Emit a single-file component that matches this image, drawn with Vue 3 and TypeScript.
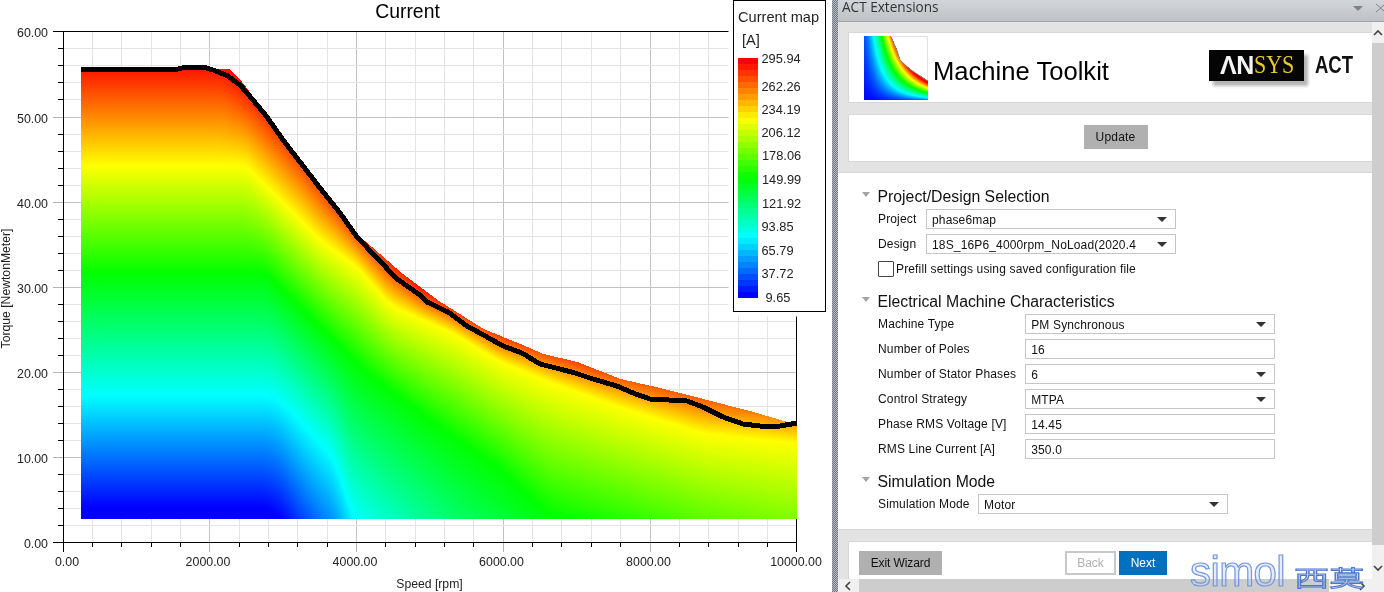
<script setup lang="ts">
import { onMounted, ref } from 'vue'

type Pt = [number, number]

// piecewise linear lookup along x
function lerpAt(pts: Pt[], x: number): number {
  if (x <= pts[0][0]) return pts[0][1]
  for (let i = 1; i < pts.length; i++) {
    if (x <= pts[i][0]) {
      const [x0, y0] = pts[i - 1]
      const [x1, y1] = pts[i]
      return y0 + ((y1 - y0) * (x - x0)) / (x1 - x0)
    }
  }
  return pts[pts.length - 1][1]
}

function rainbow(t: number): [number, number, number] {
  const v = Math.min(1, Math.max(0, t)) * 4
  if (v < 1) return [0, Math.round(255 * v), 255]
  if (v < 2) return [0, 255, Math.round(255 * (2 - v))]
  if (v < 3) return [Math.round(255 * (v - 2)), 255, 0]
  return [255, Math.round(255 * (4 - v)), 0]
}

// iso current lines of the map, screen coordinates
const contours: { t: number; pts: Pt[] }[] = [
  { t: 1, pts: [[81, 60], [222, 60], [262, 95], [300, 140], [357, 222], [420, 285], [500, 328], [600, 358], [700, 378], [797, 392]] },
  { t: 0.75, pts: [[81, 165], [245, 165], [287, 207], [320, 240], [357, 267], [390, 305], [453, 333], [497, 360], [550, 382], [620, 407], [703, 433], [797, 443]] },
  { t: 0.5, pts: [[81, 273], [265, 273], [293, 300], [367, 373], [430, 420], [497, 467], [550, 515], [797, 595]] },
  { t: 0.25, pts: [[81, 395], [270, 395], [283, 403], [333, 457], [353, 517], [420, 590], [550, 750], [797, 900]] },
  { t: 0, pts: [[81, 507], [265, 507], [283, 519], [353, 640], [420, 720], [797, 1100]] }
]

const upperEdge: Pt[] = [
  [81, 69], [229, 69], [240, 80], [267, 115], [357, 235], [367, 243], [400, 272], [420, 287], [440, 302], [453, 310],
  [483, 329], [520, 344], [543, 354], [577, 362], [620, 379], [660, 388], [703, 399], [753, 412], [787, 422], [797, 424]
]

const curvePts: Pt[] = [
  [81, 69.5], [176, 69.5], [184, 67.5], [205, 67.5], [213, 70], [227, 75.5], [240, 85], [253, 100], [267, 117], [283, 140],
  [300, 162], [320, 188], [340, 213], [357, 237], [377, 258], [397, 279], [420, 295], [427, 302], [448, 312], [467, 326],
  [487, 337], [503, 346], [522, 353], [540, 364], [560, 369], [575, 373], [593, 379], [617, 386], [633, 393], [650, 399],
  [687, 401], [703, 407], [723, 417], [743, 424], [760, 426], [780, 426], [797, 423]
]
const curve = curvePts.map((p) => p.join(',')).join(' ')

const gridX = Array.from({ length: 26 }, (_, i) => ({ x: Math.floor(63 + i * 29.35) + 0.5, major: i % 5 === 0 }))
const gridY = Array.from({ length: 31 }, (_, i) => ({ y: Math.floor(31.9 + i * 17.02) + 0.5, major: i % 5 === 0 }))

const yLabels = [
  { text: '60.00', y: 32 },
  { text: '50.00', y: 118 },
  { text: '40.00', y: 203 },
  { text: '30.00', y: 288 },
  { text: '20.00', y: 373 },
  { text: '10.00', y: 458 },
  { text: '0.00', y: 543 }
]
const xLabels = [
  { text: '0.00', x: 67 },
  { text: '2000.00', x: 208 },
  { text: '4000.00', x: 355 },
  { text: '6000.00', x: 501.5 },
  { text: '8000.00', x: 648.5 },
  { text: '10000.00', x: 796 }
]

const legendTicks = [
  { text: '295.94', left: 27.5, top: 58.5 },
  { text: '262.26', left: 27.5, top: 86.5 },
  { text: '234.19', left: 27.5, top: 109.5 },
  { text: '206.12', left: 27.5, top: 133 },
  { text: '178.06', left: 28, top: 156 },
  { text: '149.99', left: 28, top: 180 },
  { text: '121.92', left: 28, top: 203.5 },
  { text: '93.85', left: 27.5, top: 227 },
  { text: '65.79', left: 27.5, top: 251 },
  { text: '37.72', left: 27.5, top: 274 },
  { text: '9.65', left: 31.5, top: 298 }
]

const legendBands = Array.from({ length: 40 }, (_, i) => {
  const [r, g, b] = rainbow(1 - i / 39)
  return `rgb(${r},${g},${b})`
})

const projectRows = [
  { label: 'Project', value: 'phase6map', select: true },
  { label: 'Design', value: '18S_16P6_4000rpm_NoLoad(2020.4', select: true }
]
const machineRows = [
  { label: 'Machine Type', value: 'PM Synchronous', select: true },
  { label: 'Number of Poles', value: '16', select: false },
  { label: 'Number of Stator Phases', value: '6', select: true },
  { label: 'Control Strategy', value: 'MTPA', select: true },
  { label: 'Phase RMS Voltage [V]', value: '14.45', select: false },
  { label: 'RMS Line Current [A]', value: '350.0', select: false }
]
const modeRows = [{ label: 'Simulation Mode', value: 'Motor', select: true }]

const heatCanvas = ref<HTMLCanvasElement | null>(null)
const thumbCanvas = ref<HTMLCanvasElement | null>(null)

function drawHeat(cv: HTMLCanvasElement) {
  const ctx = cv.getContext('2d')
  if (!ctx) return
  const img = ctx.createImageData(cv.width, cv.height)
  for (let x = 81; x <= 796; x++) {
    // soften the contour corners a little
    const ys = contours.map((c) => {
      let sum = 0
      for (let k = -6; k <= 6; k += 2) sum += lerpAt(c.pts, x + k)
      return sum / 7
    })
    const top = Math.round(lerpAt(upperEdge, x))
    for (let y = top; y < 519; y++) {
      let t = 1
      if (y >= ys[ys.length - 1]) t = 0
      else if (y > ys[0]) {
        for (let i = 1; i < ys.length; i++) {
          if (y <= ys[i]) {
            const f = (y - ys[i - 1]) / (ys[i] - ys[i - 1])
            t = contours[i - 1].t + (contours[i].t - contours[i - 1].t) * f
            break
          }
        }
      }
      const [r, g, b] = rainbow(t)
      const o = (y * cv.width + x) * 4
      img.data[o] = r
      img.data[o + 1] = g
      img.data[o + 2] = b
      img.data[o + 3] = 255
    }
  }
  ctx.putImageData(img, 0, 0)
}

function drawThumb(cv: HTMLCanvasElement) {
  const ctx = cv.getContext('2d')
  if (!ctx) return
  const edge: Pt[] = [[0, 0], [26.7, 0], [32.7, 14], [36, 24], [46, 33.3], [64, 45]]
  ctx.fillStyle = '#fff'
  ctx.fillRect(0, 0, 64, 64)
  for (let x = 0; x < 64; x++) {
    const top = Math.round(lerpAt(edge, x))
    for (let y = top; y < 64; y++) {
      const u = x / 64
      const w = (64 - y) / 64
      const level = 2.116 * (Math.pow(u, 1.25) + 0.076) * (Math.pow(w, 0.75) + 0.07)
      const [r, g, b] = rainbow(Math.pow(level, 1.4))
      ctx.fillStyle = `rgb(${r},${g},${b})`
      ctx.fillRect(x, y, 1, 1)
    }
  }
  ctx.strokeStyle = '#8a8a8a'
  ctx.beginPath()
  edge.slice(1).forEach(([x, y], i) => (i ? ctx.lineTo(x, y) : ctx.moveTo(x, y)))
  ctx.stroke()
  ctx.strokeStyle = '#e2e2e2'
  ctx.beginPath()
  ctx.moveTo(27, 0.5)
  ctx.lineTo(63.5, 0.5)
  ctx.lineTo(63.5, 44)
  ctx.stroke()
}

onMounted(() => {
  if (heatCanvas.value) drawHeat(heatCanvas.value)
  if (thumbCanvas.value) drawThumb(thumbCanvas.value)
})
</script>

<template>
  <div class="app">
    <div class="chart">
      <svg class="layer" width="832" height="592" shape-rendering="crispEdges">
        <g v-for="g in gridX" :key="g.x">
          <line :x1="g.x" y1="31" :x2="g.x" y2="542" :stroke="g.major ? '#c2c2c2' : '#e4e4e4'" />
          <line :x1="g.x" y1="542" :x2="g.x" :y2="g.major ? 552 : 547" :stroke="g.major && g.x > 64 && g.x < 796 ? '#b4b4b4' : '#000'" />
        </g>
        <g v-for="g in gridY" :key="g.y">
          <line x1="63" :y1="g.y" x2="797" :y2="g.y" :stroke="g.major ? '#c2c2c2' : '#e4e4e4'" />
          <line :x1="g.major ? 53 : 58" :y1="g.y" x2="63" :y2="g.y" :stroke="g.major && g.y > 32 && g.y < 542 ? '#b4b4b4' : '#000'" />
        </g>
        <line x1="53" y1="31.5" x2="797" y2="31.5" stroke="#000" />
        <line x1="63" y1="542.5" x2="797" y2="542.5" stroke="#000" />
        <line x1="63.5" y1="31" x2="63.5" y2="552" stroke="#000" />
        <line x1="796.5" y1="31" x2="796.5" y2="552" stroke="#000" />
      </svg>
      <canvas ref="heatCanvas" class="layer" width="832" height="592"></canvas>
      <svg class="layer" width="832" height="592">
        <polyline :points="curve" fill="none" stroke="#000" stroke-width="5" shape-rendering="crispEdges" />
        <text x="407.5" y="17.5" class="plot-title">Current</text>
        <text v-for="l in yLabels" :key="l.text" x="48" :y="l.y + 4.5" class="tick tick-y">{{ l.text }}</text>
        <text v-for="l in xLabels" :key="l.text" :x="l.x" y="565.5" class="tick tick-x">{{ l.text }}</text>
        <text x="429.5" y="588" class="axis-name">Speed [rpm]</text>
        <text transform="translate(10 288.5) rotate(-90)" class="axis-name">Torque [NewtonMeter]</text>
      </svg>

      <div class="legend">
        <div class="legend-title">Current map</div>
        <div class="legend-unit">[A]</div>
        <div class="legend-bar">
          <i v-for="(c, i) in legendBands" :key="i" :style="{ background: c }"></i>
        </div>
        <span
          v-for="t in legendTicks"
          :key="t.text"
          class="legend-tick"
          :style="{ left: t.left + 'px', top: t.top + 'px' }"
        >{{ t.text }}</span>
      </div>
    </div>

    <div class="splitter"></div>

    <div class="panel">
      <div class="titlebar">
        <span class="titlebar-text">ACT Extensions</span>
        <svg class="titlebar-icons" width="34" height="14" viewBox="0 0 34 14">
          <path d="M2 5h10l-5 5z" fill="#7d8288" />
          <path d="M25 3l9 8M34 3l-9 8" stroke="#7d8288" stroke-width="1" fill="none" />
        </svg>
      </div>

      <div class="body">
        <div class="content">
          <div class="head-strip">
            <div class="card card-brand">
              <canvas ref="thumbCanvas" class="thumb" width="64" height="64"></canvas>
              <span class="brand-title">Machine Toolkit</span>
              <div class="logo">
                <div class="logo-box"><span class="logo-an">ΛN</span><span class="logo-sys">SYS</span></div>
                <span class="logo-act">ACT</span>
              </div>
            </div>
            <div class="card card-update">
              <button class="btn btn-grey btn-update">Update</button>
            </div>
          </div>

          <div class="form">
            <section class="group">
              <h3 class="group-head"><i class="fold"></i>Project/Design Selection</h3>
              <div class="rows rows-project">
                <template v-for="r in projectRows" :key="r.label">
                  <label class="row-label">{{ r.label }}</label>
                  <div class="field">{{ r.value }}<i v-if="r.select" class="caret"></i></div>
                </template>
              </div>
              <div class="check-row"><span class="check"></span>Prefill settings using saved configuration file</div>
            </section>

            <section class="group">
              <h3 class="group-head"><i class="fold"></i>Electrical Machine Characteristics</h3>
              <div class="rows">
                <template v-for="r in machineRows" :key="r.label">
                  <label class="row-label">{{ r.label }}</label>
                  <div class="field">{{ r.value }}<i v-if="r.select" class="caret"></i></div>
                </template>
              </div>
            </section>

            <section class="group">
              <h3 class="group-head"><i class="fold"></i>Simulation Mode</h3>
              <div class="rows rows-mode">
                <template v-for="r in modeRows" :key="r.label">
                  <label class="row-label">{{ r.label }}</label>
                  <div class="field">{{ r.value }}<i v-if="r.select" class="caret"></i></div>
                </template>
              </div>
            </section>
          </div>

          <div class="foot-strip">
            <div class="card card-foot">
              <button class="btn btn-grey btn-exit">Exit Wizard</button>
              <button class="btn btn-back">Back</button>
              <button class="btn btn-next">Next</button>
            </div>
          </div>

          <div class="hscroll">
            <span class="scroll-btn scroll-left">
              <svg width="10" height="10" viewBox="0 0 10 10"><path d="M7 1L3 5l4 4" fill="none" stroke="#444" stroke-width="1.6" /></svg>
            </span>
            <span class="hscroll-thumb"></span>
            <span class="scroll-btn scroll-right">
              <svg width="10" height="10" viewBox="0 0 10 10"><path d="M3 1l4 4-4 4" fill="none" stroke="#444" stroke-width="1.6" /></svg>
            </span>
          </div>
        </div>

        <div class="vscroll">
          <span class="vscroll-btn vscroll-up">
            <svg width="10" height="10" viewBox="0 0 10 10"><path d="M1 7l4-4 4 4" fill="none" stroke="#444" stroke-width="1.6" /></svg>
          </span>
          <span class="vscroll-thumb"></span>
          <span class="vscroll-btn vscroll-down">
            <svg width="10" height="10" viewBox="0 0 10 10"><path d="M1 3l4 4 4-4" fill="none" stroke="#444" stroke-width="1.6" /></svg>
          </span>
        </div>
      </div>

      <div class="watermark"><span class="wm-latin">simol</span><span class="wm-cjk">西莫</span></div>
    </div>
  </div>
</template>

<style>
html,
body {
  margin: 0;
  background: #fff;
}
</style>

<style scoped>
.app {
  display: flex;
  width: 1384px;
  height: 592px;
  overflow: hidden;
  font-family: "Liberation Sans", Arial, sans-serif;
  color: #111;
}

.chart {
  position: relative;
  width: 832px;
  height: 592px;
  flex: none;
  background: #fff;
}
.layer {
  position: absolute;
  left: 0;
  top: 0;
  display: block;
}
.plot-title {
  font-size: 19.4px;
  text-anchor: middle;
  fill: #000;
}
.tick {
  font-size: 12.4px;
  fill: #222;
}
.tick-y {
  text-anchor: end;
}
.tick-x {
  text-anchor: middle;
}
.axis-name {
  font-size: 12.2px;
  text-anchor: middle;
  fill: #222;
}

.legend {
  position: absolute;
  left: 733px;
  top: 0;
  width: 91px;
  height: 310px;
  border: 1px solid #000;
  background: #fff;
  box-shadow: 0 0 0 4.5px #fff;
  color: #222;
}
.legend-title {
  position: absolute;
  left: 4px;
  top: 8px;
  font-size: 14.6px;
  line-height: 17px;
  white-space: nowrap;
}
.legend-unit {
  position: absolute;
  left: 8px;
  top: 31px;
  font-size: 14.6px;
  line-height: 17px;
}
.legend-bar {
  position: absolute;
  left: 4px;
  top: 57px;
  width: 20px;
  height: 240px;
  display: flex;
  flex-direction: column;
}
.legend-bar i {
  display: block;
  flex: 1;
}
.legend-tick {
  position: absolute;
  font-size: 12.8px;
  line-height: 14px;
  margin-top: -8px;
}

.splitter {
  width: 6px;
  flex: none;
  background-color: #b9bdc4;
  background-image: conic-gradient(#6e7580 25%, transparent 0 50%, #6e7580 0 75%, transparent 0);
  background-size: 2px 2px;
}

.panel {
  position: relative;
  flex: 1;
  min-width: 0;
  display: flex;
  flex-direction: column;
  background: #fff;
}
.titlebar {
  height: 21px;
  flex: none;
  display: flex;
  align-items: center;
  justify-content: space-between;
  padding-left: 4px;
  background: linear-gradient(#d2d6da, #bfc1c4);
  border-bottom: 1px solid #a2a4a6;
  overflow: hidden;
}
.titlebar-text {
  font-family: "Open Sans", sans-serif;
  font-size: 13.6px;
  line-height: 14px;
  color: #333;
  margin-top: -7px;
}
.titlebar-icons {
  flex: none;
  margin-top: -6px;
  margin-right: -1px;
}

.body {
  flex: 1;
  min-height: 0;
  display: flex;
}
.content {
  flex: 1;
  min-width: 0;
  display: flex;
  flex-direction: column;
}

.head-strip {
  height: 151px;
  box-sizing: border-box;
  padding: 10px 0 10px 10px;
  display: flex;
  flex-direction: column;
  gap: 11px;
  background: #e3e3e3;
  border-bottom: 1px solid #d8d8d8;
}
.card {
  box-sizing: border-box;
  background: #fff;
  border: 1px solid #d8d8d8;
  border-right: 0;
}
.card-brand {
  height: 71px;
  display: flex;
  align-items: center;
  padding-left: 15px;
}
.thumb {
  display: block;
  flex: none;
}
.brand-title {
  margin-left: 5px;
  font-size: 25.6px;
  color: #000;
  white-space: nowrap;
  margin-top: 8px;
}
.logo {
  margin-left: auto;
  margin-right: 20px;
  display: flex;
  align-items: center;
  gap: 11px;
  margin-top: -5px;
}
.logo-box {
  width: 95px;
  height: 31px;
  box-sizing: border-box;
  padding-left: 11px;
  display: flex;
  align-items: center;
  background: #050505;
  box-shadow: 4px 5px 3px #b5b5b5;
  white-space: nowrap;
}
.logo-an {
  font-size: 25px;
  font-weight: 700;
  color: #f4f4f4;
  letter-spacing: -0.5px;
}
.logo-sys {
  font-family: "Liberation Serif", serif;
  font-size: 25px;
  color: #e6c92a;
  transform: scaleX(0.88);
  transform-origin: left;
}
.logo-act {
  display: block;
  width: 37px;
  font-size: 24px;
  font-weight: 700;
  color: #111;
  white-space: nowrap;
  transform: scaleX(0.77);
  transform-origin: left;
}
.card-update {
  height: 48px;
  display: flex;
  justify-content: center;
  align-items: center;
}

.btn {
  box-sizing: border-box;
  height: 24px;
  padding: 0;
  border: 0;
  font-family: inherit;
  font-size: 12px;
  flex: none;
}
.btn-grey {
  background: #b0b0b0;
  color: #111;
}
.btn-update {
  width: 64px;
  margin-left: 10px;
  margin-top: -2px;
  letter-spacing: 0.2px;
}

.form {
  height: 356px;
  box-sizing: border-box;
  padding: 13px 0 0 24px;
  font-size: 12px;
  letter-spacing: 0.15px;
}
.group {
  margin-bottom: 12px;
}
.group-head {
  position: relative;
  margin: 0 0 3px;
  padding-left: 15.5px;
  height: 20px;
  line-height: 22px;
  font-size: 15.8px;
  font-weight: 400;
  letter-spacing: 0;
  color: #111;
}
.fold {
  position: absolute;
  left: 0;
  top: 6px;
  border-left: 4.5px solid transparent;
  border-right: 4.5px solid transparent;
  border-top: 5px solid #a4a4a4;
}
.rows {
  display: grid;
  grid-template-columns: auto 250px;
  column-gap: 9px;
  row-gap: 5px;
  justify-content: start;
  margin-left: 16px;
}
.rows-project {
  grid-template-columns: 39px 250px;
}
.rows-mode {
  grid-template-columns: 91px 250px;
}
.row-label {
  line-height: 20px;
  height: 20px;
  white-space: nowrap;
}
.field {
  position: relative;
  box-sizing: border-box;
  height: 20px;
  line-height: 20px;
  padding-left: 5px;
  border: 1px solid #c6c6c6;
  background: #fff;
  white-space: nowrap;
  overflow: hidden;
}
.caret {
  position: absolute;
  right: 8px;
  top: 7px;
  border-left: 5px solid transparent;
  border-right: 5px solid transparent;
  border-top: 5px solid #333;
}
.check-row {
  display: flex;
  align-items: center;
  gap: 2px;
  height: 20px;
  margin-top: 5px;
  margin-left: 16px;
  white-space: nowrap;
}
.check {
  width: 14px;
  height: 14px;
  border: 1px solid #444;
  border-radius: 1px;
  flex: none;
}

.foot-strip {
  flex: 1;
  min-height: 0;
  box-sizing: border-box;
  padding: 11px 0 0 10px;
  background: #e3e3e3;
  border-top: 1px solid #d8d8d8;
  display: flex;
}
.card-foot {
  flex: 1;
  display: flex;
  align-items: flex-start;
  padding: 9px 0 0 10px;
  border-bottom: 0;
}
.btn-exit {
  width: 83px;
  letter-spacing: -0.1px;
}
.btn-back {
  width: 51px;
  margin-left: 123px;
  background: #fff;
  border: 2px solid #c8c8c8;
  color: #b0b0b0;
}
.btn-next {
  width: 48px;
  margin-left: 3px;
  background: #0070c0;
  color: #fff;
}

.hscroll {
  height: 13px;
  flex: none;
  display: flex;
  background: #f0f0f0;
}
.scroll-btn {
  flex: none;
  display: flex;
  align-items: center;
  overflow: hidden;
}
.scroll-left {
  width: 21px;
  padding-left: 5px;
  box-sizing: border-box;
}
.scroll-right {
  width: 43px;
  justify-content: flex-end;
  padding-right: 5px;
  box-sizing: border-box;
}
.hscroll-thumb {
  flex: 1;
  background: #cdcdcd;
}

.vscroll {
  width: 12px;
  flex: none;
  display: flex;
  flex-direction: column;
  background: #f0f0f0;
}
.vscroll-btn {
  display: flex;
  justify-content: center;
  flex: none;
  overflow: hidden;
}
.vscroll-up {
  height: 21px;
  align-items: center;
}
.vscroll-down {
  height: 47px;
  padding-top: 18px;
  box-sizing: border-box;
}
.vscroll-thumb {
  flex: 1;
  background: #cdcdcd;
}

.watermark {
  position: absolute;
  left: 352px;
  top: 550px;
  display: flex;
  align-items: baseline;
  white-space: nowrap;
  pointer-events: none;
}
.wm-latin {
  font-size: 42px;
  line-height: 44px;
  color: rgba(200, 216, 244, 0.45);
  -webkit-text-stroke: 1.2px #7197dc;
  letter-spacing: -0.6px;
}
.wm-cjk {
  display: inline-block;
  margin-left: 9px;
  font-family: "Noto Sans CJK SC", sans-serif;
  font-size: 22px;
  line-height: 30px;
  color: rgba(120, 150, 215, 0.35);
  -webkit-text-stroke: 0.9px #4e78c8;
  transform: scaleX(1.6);
  transform-origin: left;
}
</style>
